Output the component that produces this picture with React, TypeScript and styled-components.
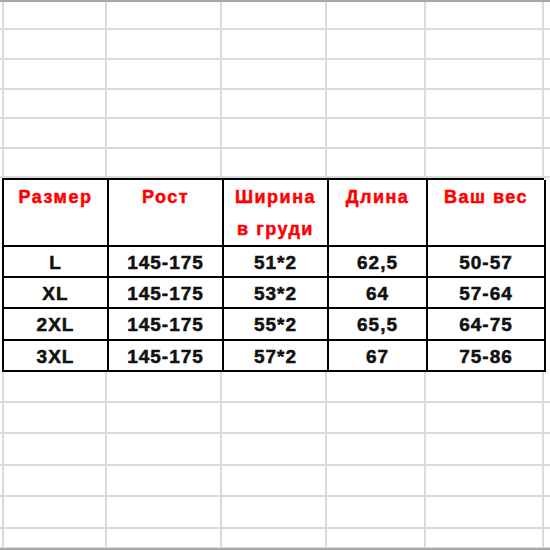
import React from 'react';
import styled, { createGlobalStyle } from 'styled-components';

const GlobalStyle = createGlobalStyle`
  html, body {
    margin: 0;
    padding: 0;
    background: #fff;
    overflow: hidden;
  }
  body {
    font-family: "Liberation Sans", Arial, sans-serif;
  }
`;

const COLS = '105px 115px 105px 99px 118px';

const Sheet = styled.div`
  width: 550px;
  height: 550px;
  box-sizing: border-box;
  border-top: 2px solid #a8a8a8;
  border-bottom: 2px solid #a8a8a8;
  display: flex;
  flex-direction: column;
  overflow: hidden;
`;

const EmptyRow = styled.div<{ $h: number }>`
  display: grid;
  grid-template-columns: ${COLS} 1fr;
  height: ${(p) => p.$h}px;
  flex-shrink: 0;
  box-sizing: border-box;
  border-bottom: 2px solid #dadada;
  padding-left: 2px;
`;

const EmptyCell = styled.div<{ $first?: boolean }>`
  box-sizing: border-box;
  border-right: 2px solid #dadada;
  border-left: ${(p) => (p.$first ? '2px solid #dadada' : 'none')};
`;

const TableRow = styled.div`
  display: grid;
  grid-template-columns: ${COLS} 1fr;
  padding-left: 2px;
  flex-shrink: 0;
`;

const Table = styled.div`
  display: grid;
  grid-template-columns: ${COLS};
  box-sizing: border-box;
  border-top: 2px solid #000;
  border-left: 2px solid #000;
  grid-column: 1 / 6;
`;

const Tail = styled.div`
  box-sizing: border-box;
`;

const HeadCell = styled.div`
  box-sizing: border-box;
  height: 67px;
  border-right: 2px solid #000;
  border-bottom: 2px solid #000;
  color: #ff0000;
  font-weight: bold;
  font-size: 18px;
  letter-spacing: 1.5px;
  -webkit-text-stroke: 0.5px #ff0000;
  line-height: 32px;
  text-align: center;
  padding-top: 1px;
`;

const Cell = styled.div<{ $h: number }>`
  box-sizing: border-box;
  height: ${(p) => p.$h}px;
  border-right: 2px solid #000;
  border-bottom: 2px solid #000;
  color: #111;
  font-weight: bold;
  font-size: 19px;
  letter-spacing: 1px;
  -webkit-text-stroke: 0.5px #111;
  display: flex;
  align-items: center;
  justify-content: center;
  padding-top: 2px;
`;

const headers = ['Размер', 'Рост', 'Ширина\nв груди', 'Длина', 'Ваш вес'];

const rows = [
  { h: 31, cells: ['L', '145-175', '51*2', '62,5', '50-57'] },
  { h: 31, cells: ['XL', '145-175', '53*2', '64', '57-64'] },
  { h: 32, cells: ['2XL', '145-175', '55*2', '65,5', '64-75'] },
  { h: 31, cells: ['3XL', '145-175', '57*2', '67', '75-86'] },
];

const above = [28, 30, 30, 29, 30, 29];
const below = [31, 31, 32, 31, 32, 20];

function Blank({ h }: { h: number }) {
  return (
    <EmptyRow $h={h}>
      {[0, 1, 2, 3, 4].map((i) => (
        <EmptyCell key={i} $first={i === 0} />
      ))}
      <div />
    </EmptyRow>
  );
}

export default function App() {
  return (
    <>
      <GlobalStyle />
      <Sheet>
        {above.map((h, i) => (
          <Blank key={'a' + i} h={h} />
        ))}
        <TableRow>
          <Table>
            {headers.map((t) => (
              <HeadCell key={t}>
                {t.split('\n').map((line) => (
                  <div key={line}>{line}</div>
                ))}
              </HeadCell>
            ))}
            {rows.map((r) =>
              r.cells.map((c, j) => (
                <Cell key={r.cells[0] + j} $h={r.h}>
                  {c}
                </Cell>
              ))
            )}
          </Table>
          <Tail />
        </TableRow>
        {below.map((h, i) => (
          <Blank key={'b' + i} h={h} />
        ))}
      </Sheet>
    </>
  );
}
